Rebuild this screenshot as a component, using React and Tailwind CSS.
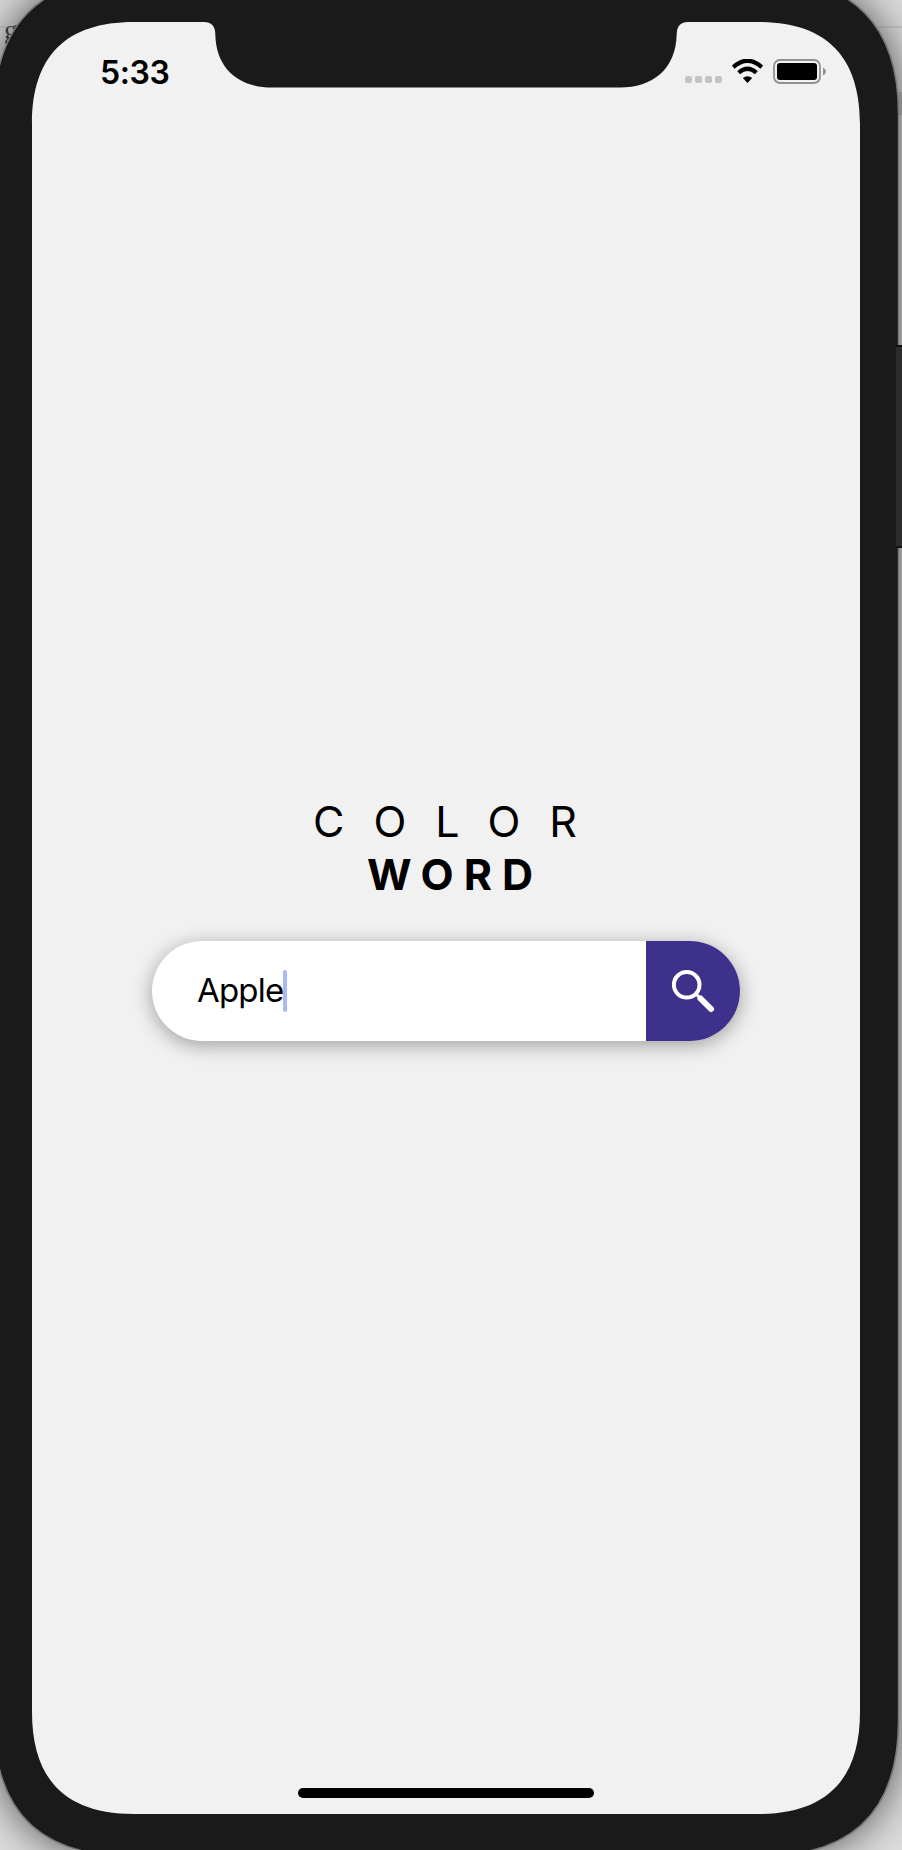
const SCREEN =
  "M32 124C32 56 66 22 134 22H204Q215 22 215.3 34C216 70 240 87.5 272 87.5H620C652 87.5 676 70 676.7 34Q677 22 688 22H758C826 22 860 56 860 124V1712C860 1780 826 1814 758 1814H134C66 1814 32 1780 32 1712Z";
const BODY =
  "M-6 114C-6 25 39 -22 130 -22H762C853 -22 898.5 25 898.5 114V1720C898.5 1810 853 1856 762 1856H130C39 1856 -6 1810 -6 1720Z";

function Device() {
  return (
    <svg className="absolute inset-0" width="902" height="1850" viewBox="0 0 902 1850">
      <defs>
        <filter id="soft" x="-20%" y="-20%" width="140%" height="140%">
          <feGaussianBlur stdDeviation="22" />
        </filter>
      </defs>
      <path d={BODY} fill="#000" opacity="0.65" filter="url(#soft)" />
      <path d="M0 27H60M870 27H902" stroke="#888" strokeOpacity=".6" />
      <path d="M896 92H902V115H896Z" fill="#000" opacity=".12" />
      <path d={BODY} fill="#1a1a1a" stroke="#777" strokeWidth="1.5" />
      <path d="M896 345H902V548H896Z" fill="#2c2c2c" />
      <path d="M896 346H902M896 547H902" stroke="#111" strokeWidth="2" />
      <path d={SCREEN} fill="#f1f1f1" />
    </svg>
  );
}

function StatusBar() {
  return (
    <header className="flex h-[98px] items-start justify-between pt-[51px] pl-[100px] pr-[76px]">
      <time className="text-[32px] leading-[44px] font-semibold tracking-[-0.4px]">5:33</time>
      <div className="flex pt-[8px]">
        <div className="mr-[10px] mt-[17px] flex gap-[3px]">
          <i className="size-[7px] rounded-[2px] bg-[#c3c3c3]" />
          <i className="size-[7px] rounded-[2px] bg-[#c3c3c3]" />
          <i className="size-[7px] rounded-[2px] bg-[#c3c3c3]" />
          <i className="size-[7px] rounded-[2px] bg-[#c3c3c3]" />
        </div>
        <svg className="mr-[10px]" width="31" height="24" viewBox="0 0 31 24">
          <path d="M1.2 8.2Q15.5 -4.6 29.8 8.2" fill="none" stroke="#000" strokeWidth="4.2" />
          <path d="M6.7 13.8Q15.5 5.8 24.3 13.8" fill="none" stroke="#000" strokeWidth="4.2" />
          <path d="M10.8 19Q15.5 15.4 20.2 19L15.5 24Z" />
        </svg>
        <svg width="53" height="25" viewBox="0 0 53 25">
          <rect x="1" y="1" width="46" height="23" rx="6" fill="none" stroke="#929292" strokeWidth="1.8" />
          <rect x="4" y="4" width="40" height="17" rx="3" />
          <path d="M50 8.5Q53 10 53 12.5T50 16.5Z" fill="#929292" />
        </svg>
      </div>
    </header>
  );
}

export default function App() {
  return (
    <div className="relative h-[1850px] w-[902px] overflow-hidden bg-[#dcdcdc] font-['Inter',sans-serif] text-black">
      <span className="absolute left-[4px] top-[15px] font-['Liberation_Serif',serif] text-[28px] leading-[30px] text-[#444]">g</span>
      <Device />
      <main className="relative flex h-full flex-col">
        <StatusBar />
        <h1 className="mt-[697px] flex flex-col text-[43px] leading-[53px]">
          <span className="pl-[313px] tracking-[29px] whitespace-nowrap">COLOR</span>
          <span className="pl-[367px] font-bold tracking-[10px] whitespace-nowrap">WORD</span>
        </h1>
        <div className="mt-[40px] ml-[152px] flex h-[100px] w-[588px] rounded-full bg-white shadow-[0_4px_20px_rgba(0,0,0,0.35)]">
          <div className="flex grow items-center pl-[45px]">
            <span className="-mt-[2px] text-[33px] leading-[42px] tracking-[-0.8px]">Apple</span>
            <i className="h-[42px] w-[4px] rounded-[2px] bg-[#a9b9f9]" />
          </div>
          <button className="w-[94px] rounded-r-[50px] bg-[#3e318b]" aria-label="Search">
            <svg width="94" height="100" viewBox="0 0 94 100" fill="none" stroke="#fff">
              <circle cx="40.7" cy="43.8" r="12.8" strokeWidth="4" />
              <path d="M50 53L54 57" strokeWidth="3" />
              <path d="M54.5 57.5L65 68" strokeWidth="6" strokeLinecap="round" />
            </svg>
          </button>
        </div>
        <div className="mt-auto mb-[52px] ml-[298px] h-[10px] w-[296px] rounded-full bg-black" />
      </main>
    </div>
  );
}
